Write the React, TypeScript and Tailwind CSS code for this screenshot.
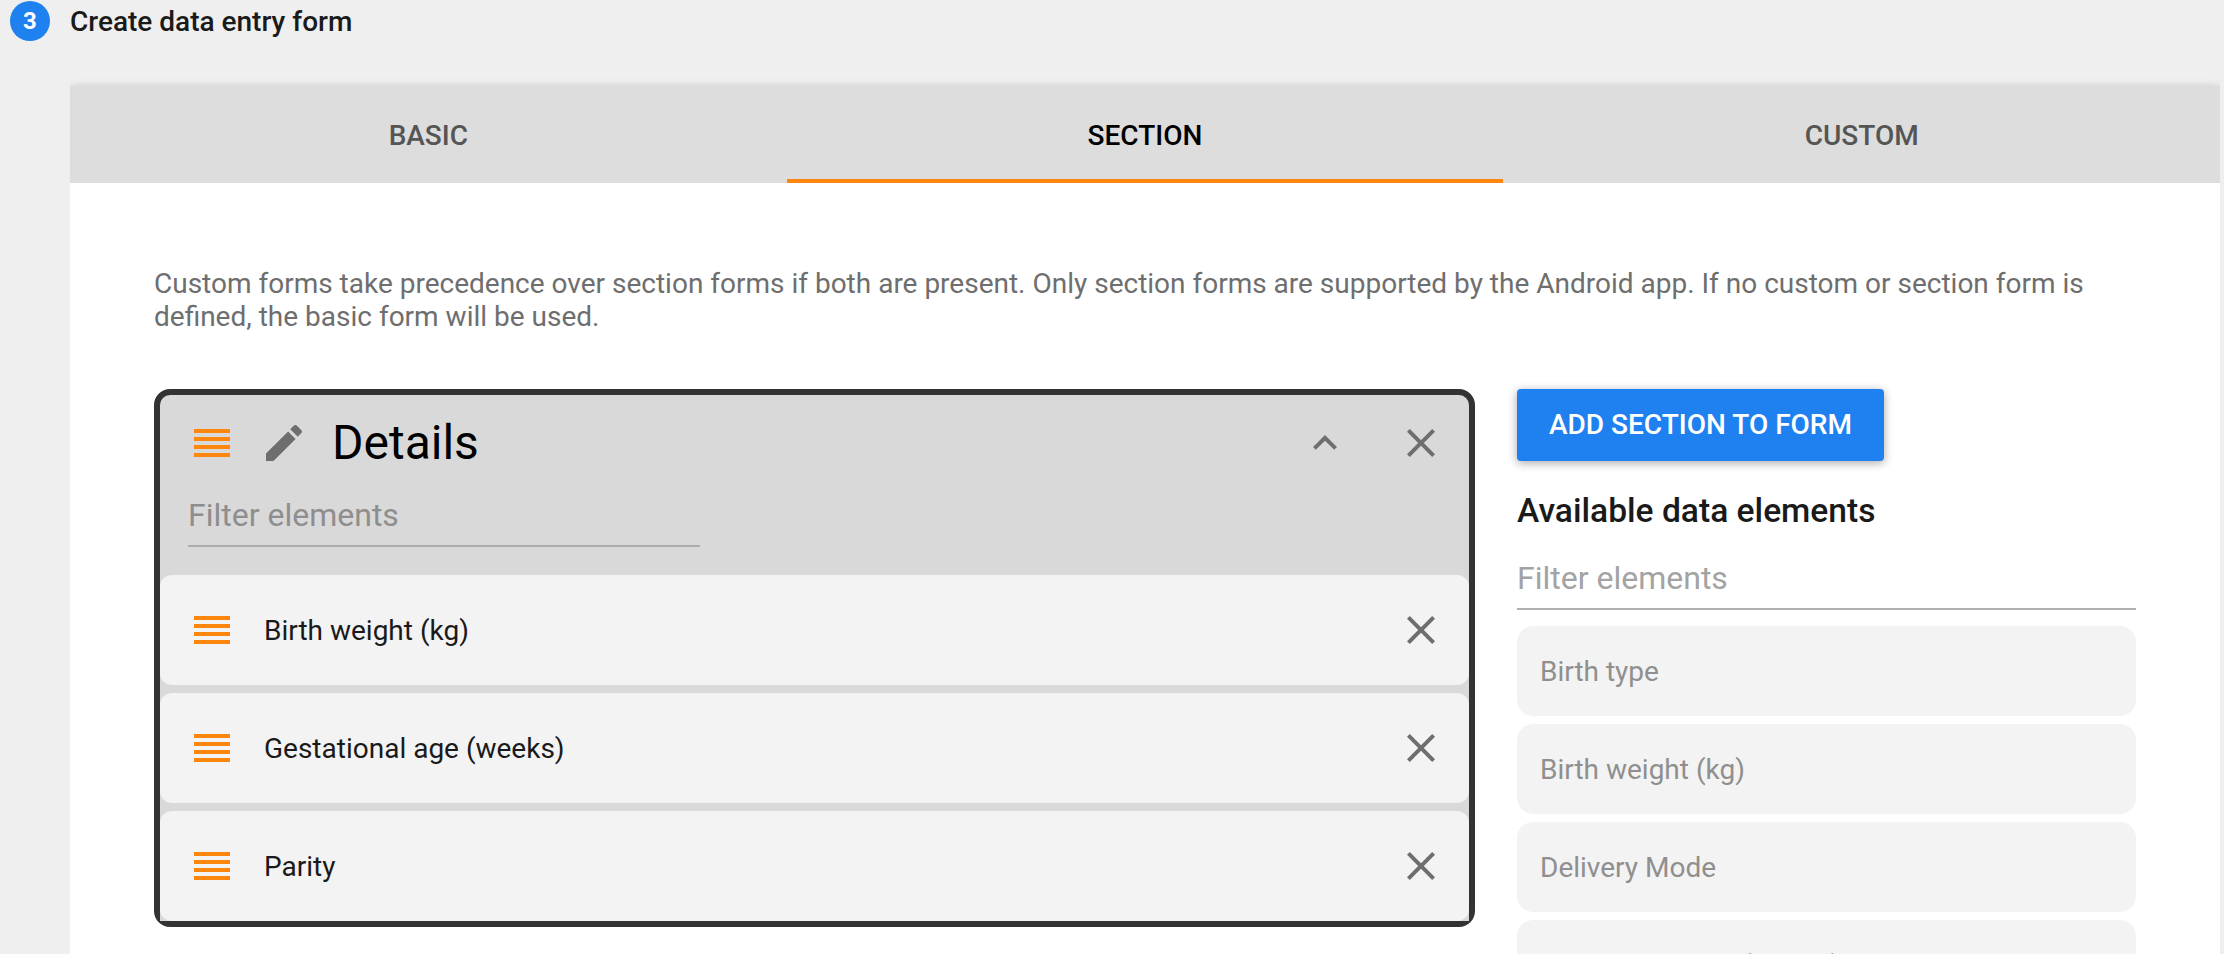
import React from "react";

const tabs = [
  { label: "Basic", active: false },
  { label: "Section", active: true },
  { label: "Custom", active: false },
];

const sectionElements = ["Birth weight (kg)", "Gestational age (weeks)", "Parity"];

const availableElements = [
  "Birth type",
  "Birth weight (kg)",
  "Delivery Mode",
  "Gestational age (weeks)",
];

function DragHandle() {
  return (
    <div className="flex w-9 shrink-0 flex-col gap-1">
      <div className="h-1 bg-[#ff860d]" />
      <div className="h-1 bg-[#ff860d]" />
      <div className="h-1 bg-[#ff860d]" />
      <div className="h-1 bg-[#ff860d]" />
    </div>
  );
}

function Icon({ d }: { d: string }) {
  return (
    <svg viewBox="0 0 24 24" className="size-12 shrink-0 fill-[#6e6e6e]">
      <path d={d} />
    </svg>
  );
}

const EDIT =
  "M3 17.25V21h3.75L17.81 9.94l-3.75-3.75L3 17.25zM20.71 7.04c.39-.39.39-1.02 0-1.41l-2.34-2.34c-.39-.39-1.02-.39-1.41 0l-1.83 1.83 3.75 3.75 1.83-1.83z";
const EXPAND_LESS = "M12 8l-6 6 1.41 1.41L12 10.83l4.59 4.58L18 14z";
const CLOSE =
  "M19 6.41L17.59 5 12 10.59 6.41 5 5 6.41 10.59 12 5 17.59 6.41 19 12 13.41 17.59 19 19 17.59 13.41 12z";

function SectionCard() {
  return (
    <section className="w-[1321px] shrink-0 rounded-2xl border-[6px] border-[#333] bg-[#d9d9d9]">
      <div className="h-[180px] pt-6">
        <div className="flex h-12 items-center pr-6 pl-[34px]">
          <DragHandle />
          <div className="ml-[30px] flex items-center">
            <Icon d={EDIT} />
          </div>
          <h2 className="ml-6 text-[48px] leading-[56px] text-black">Details</h2>
          <div className="ml-auto flex gap-12">
            <Icon d={EXPAND_LESS} />
            <Icon d={CLOSE} />
          </div>
        </div>
        <div className="mt-[21px] ml-7 h-[59px] w-[512px] border-b-2 border-[#acacac] pt-[8px] text-[32px] leading-[38px] text-[#8e8e8e]">
          Filter elements
        </div>
      </div>
      <div className="flex flex-col gap-2 bg-[#d9d9d9]">
        {sectionElements.map((name) => (
          <div key={name} className="flex h-[110px] items-center rounded-xl bg-[#f3f3f3] pr-6 pl-[34px]">
            <DragHandle />
            <span className="ml-[34px] pt-px text-[28px] leading-[33px] text-[#1a1a1a]">{name}</span>
            <div className="ml-auto">
              <Icon d={CLOSE} />
            </div>
          </div>
        ))}
      </div>
    </section>
  );
}

function AvailableElements() {
  return (
    <aside className="flex w-[619px] shrink-0 flex-col">
      <button className="h-[72px] w-[367px] rounded-[4px] bg-[#1f81f0] pb-px text-[28px] leading-[33px] font-medium text-white uppercase shadow-[0_2px_12px_rgba(0,0,0,0.12),0_2px_8px_rgba(0,0,0,0.24)]">
        Add section to form
      </button>
      <h3 className="mt-[30px] text-[33.6px] leading-[39px] font-medium text-[#1a1a1a]">
        Available data elements
      </h3>
      <div className="mt-[22px] h-[58px] border-b-2 border-[#b0b0b0] pt-[7px] text-[32px] leading-[38px] text-[#a3a3a3]">
        Filter elements
      </div>
      <div className="mt-4 flex flex-col gap-2">
        {availableElements.map((name) => (
          <div
            key={name}
            className="flex h-[90px] items-center rounded-2xl bg-[#f3f3f3] px-[23px] pt-px text-[28px] leading-[33px] text-[#8f8f8f]"
          >
            {name}
          </div>
        ))}
      </div>
    </aside>
  );
}

export default function App() {
  return (
    <div className="flex h-[954px] w-[2224px] flex-col overflow-hidden bg-[#efefef] font-['Roboto',sans-serif]">
      <header className="flex h-[42px] shrink-0 items-center gap-5 pl-2.5">
        <div className="flex size-10 items-center justify-center rounded-full bg-[#1f81f0] text-2xl font-bold text-white">
          3
        </div>
        <h1 className="pt-px text-[28px] leading-[33px] font-medium text-[#1a1a1a]">
          Create data entry form
        </h1>
      </header>
      <div className="ml-[70px] w-[2150px] grow overflow-hidden pt-11">
        <main className="h-[1100px] rounded-[4px] bg-white shadow-[0_2px_12px_rgba(0,0,0,0.12),0_2px_8px_rgba(0,0,0,0.12)]">
          <nav className="grid h-[97px] grid-cols-3 bg-[#ddd]">
            {tabs.map((tab) => (
              <div
                key={tab.label}
                className={
                  tab.active
                    ? "flex items-center justify-center border-b-4 border-[#ff860d] pt-1.5 text-[28px] leading-[33px] font-medium text-black uppercase"
                    : "flex items-center justify-center border-b-4 border-transparent pt-1.5 text-[28px] leading-[33px] font-medium text-[#555] uppercase"
                }
              >
                {tab.label}
              </div>
            ))}
          </nav>
          <div className="px-[84px] pt-[84px]">
            <p className="text-[28px] leading-[33px] text-[#6e6e6e]">
              Custom forms take precedence over section forms if both are present. Only section forms are
              supported by the Android app. If no custom or section form is defined, the basic form will be
              used.
            </p>
            <div className="mt-14 flex items-start gap-[42px]">
              <SectionCard />
              <AvailableElements />
            </div>
          </div>
        </main>
      </div>
    </div>
  );
}
